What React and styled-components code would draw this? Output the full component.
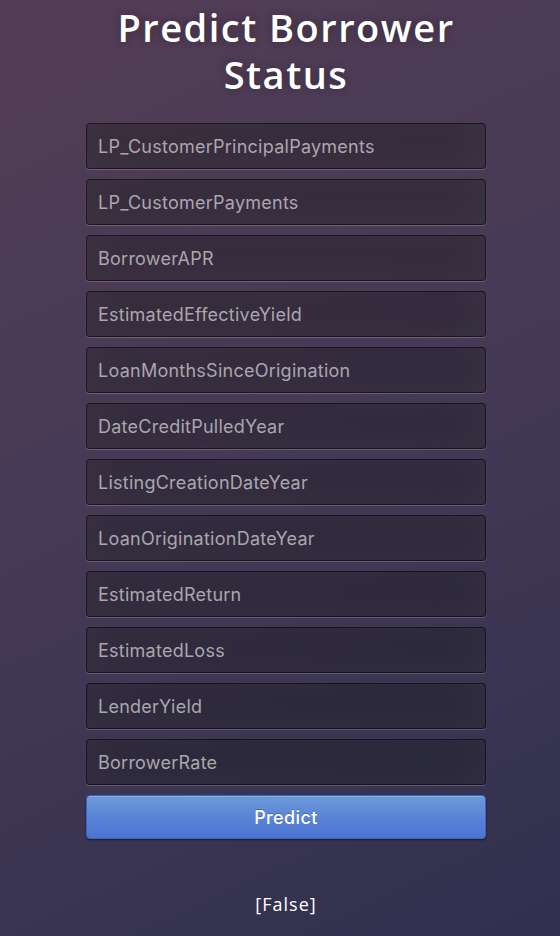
import React from 'react'
import styled, { createGlobalStyle } from 'styled-components'

const GlobalStyle = createGlobalStyle`
  html, body {
    margin: 0;
    padding: 0;
    height: 100%;
  }
  body {
    font-family: 'Open Sans', sans-serif;
    background: linear-gradient(155deg, #533d55 0%, #463a56 45%, #3a3552 75%, #30304e 100%);
    min-height: 936px;
  }
`

const Page = styled.div`
  display: flex;
  justify-content: center;
  padding-left: 12px;
  min-height: 936px;
  box-sizing: border-box;
`

const Login = styled.div`
  width: 400px;
  display: flex;
  flex-direction: column;
  padding-top: 4px;
`

const Title = styled.h1`
  margin: 0 0 25px;
  color: #fff;
  font-family: 'Open Sans', sans-serif;
  font-weight: 600;
  font-size: 38px;
  line-height: 47px;
  letter-spacing: 1.5px;
  text-align: center;
  text-shadow: 0 0 10px rgba(0, 0, 0, 0.3);
`

const Form = styled.form`
  display: flex;
  flex-direction: column;
  gap: 10px;
`

const Input = styled.input`
  box-sizing: border-box;
  width: 100%;
  height: 46px;
  padding: 0 11px;
  font-family: 'Inter', sans-serif;
  font-size: 18px;
  letter-spacing: 0.25px;
  color: #fff;
  background: rgba(0, 0, 0, 0.3);
  border: 1px solid rgba(0, 0, 0, 0.45);
  border-radius: 4px;
  outline: none;
  box-shadow: inset 0 -5px 45px rgba(100, 100, 100, 0.2), 0 1px 1px rgba(255, 255, 255, 0.2);

  &::placeholder {
    color: #aaa6ad;
  }
`

const Button = styled.button`
  box-sizing: border-box;
  width: 100%;
  height: 44px;
  font-family: 'Inter', sans-serif;
  font-size: 18px;
  font-weight: 500;
  letter-spacing: 0.4px;
  color: #fff;
  text-shadow: 0 -1px 0 rgba(0, 0, 0, 0.25);
  background: linear-gradient(to bottom, #6c9ad9 0%, #5a84d6 50%, #4a74d2 100%);
  border: 1px solid #3a64c0;
  border-radius: 4px;
  box-shadow: inset 0 1px 0 rgba(255, 255, 255, 0.2), 0 1px 2px rgba(0, 0, 0, 0.5);
  cursor: pointer;
`

const Result = styled.div`
  margin-top: 53px;
  text-align: center;
  color: #fff;
  font-family: 'Open Sans', sans-serif;
  font-size: 18px;
  font-weight: 500;
  letter-spacing: 1px;
`

const fields = [
  'LP_CustomerPrincipalPayments',
  'LP_CustomerPayments',
  'BorrowerAPR',
  'EstimatedEffectiveYield',
  'LoanMonthsSinceOrigination',
  'DateCreditPulledYear',
  'ListingCreationDateYear',
  'LoanOriginationDateYear',
  'EstimatedReturn',
  'EstimatedLoss',
  'LenderYield',
  'BorrowerRate',
]

const App = () => {
  return (
    <>
      <GlobalStyle />
      <Page>
        <Login>
          <Title>Predict Borrower Status</Title>
          <Form onSubmit={(e) => e.preventDefault()}>
            {fields.map((name) => (
              <Input key={name} type="text" name={name} placeholder={name} />
            ))}
            <Button type="submit">Predict</Button>
          </Form>
          <Result>[False]</Result>
        </Login>
      </Page>
    </>
  )
}

export default App
